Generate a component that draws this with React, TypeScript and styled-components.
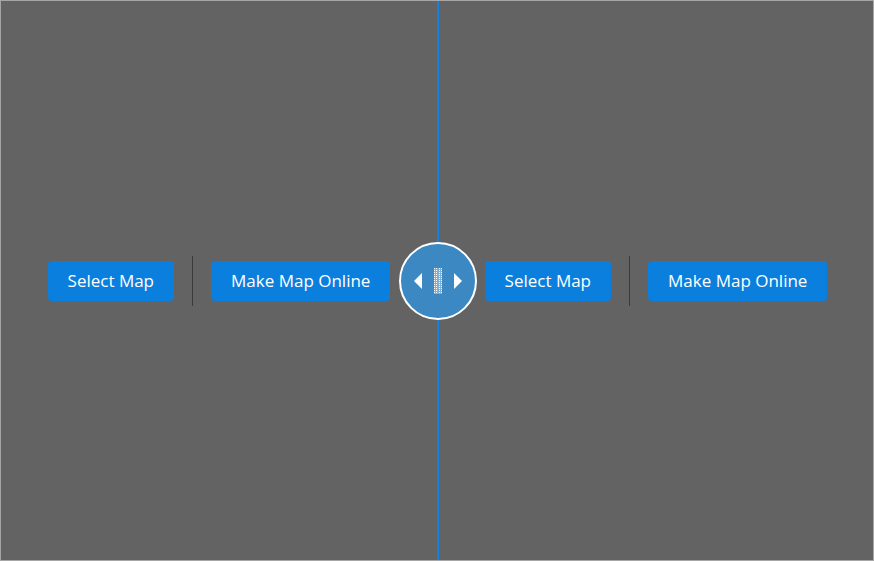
import React from "react";
import styled, { createGlobalStyle } from "styled-components";

const Global = createGlobalStyle`
  html, body { margin: 0; padding: 0; background: #636363; }
  #root { width: 874px; height: 561px; }
  * { box-sizing: border-box; }
`;

const Frame = styled.div`
  width: 874px;
  height: 561px;
  border: 1px solid #a6a6a6;
  background: #636363;
  display: flex;
  position: relative;
  font-family: "Segoe UI", "Open Sans", "Noto Sans", sans-serif;
`;

const Pane = styled.div<{ $width: number }>`
  width: ${(p) => p.$width}px;
  height: 100%;
  display: flex;
  align-items: center;
  justify-content: center;
`;

const Toolbar = styled.div`
  display: flex;
  align-items: center;
`;

const Button = styled.button`
  height: 40px;
  padding: 0 20px;
  border: none;
  border-radius: 4px;
  background: #0a7fde;
  color: #ffffff;
  font-family: inherit;
  font-size: 17px;
  line-height: 40px;
  white-space: nowrap;
  cursor: pointer;
`;

const Divider = styled.div`
  width: 1px;
  height: 50px;
  margin: 0 18px 0 18px;
  background: #3a3a3a;
`;

const Splitter = styled.div`
  width: 2px;
  height: 100%;
  background: #1282e0;
  position: relative;
`;

const Handle = styled.div`
  position: absolute;
  left: 50%;
  top: 50%;
  width: 78px;
  height: 78px;
  transform: translate(-50%, -50%);
  border-radius: 50%;
  border: 2px solid #ffffff;
  background: #3b88c3;
  display: flex;
  align-items: center;
  justify-content: center;
  gap: 12px;
`;

const Arrow = styled.div<{ $dir: "left" | "right" }>`
  width: 0;
  height: 0;
  border-top: 8px solid transparent;
  border-bottom: 8px solid transparent;
  ${(p) =>
    p.$dir === "left"
      ? "border-right: 8px solid #ffffff;"
      : "border-left: 8px solid #ffffff;"}
`;

const Grip = () => {
  const dots: React.ReactElement[] = [];
  const cols = [0, 2, 5, 7];
  for (let r = 0; r < 13; r++) {
    for (const c of cols) {
      dots.push(
        <rect key={`${r}-${c}`} x={c} y={r * 2} width={1} height={1} fill="#ffffff" />
      );
    }
  }
  return (
    <svg width="8" height="26" viewBox="0 0 8 26" style={{ display: "block" }}>
      <rect x="0" y="0" width="8" height="26" fill="#ffffff" opacity="0.35" />
      {dots}
    </svg>
  );
};

const MapToolbar = () => (
  <Toolbar>
    <Button>Select Map</Button>
    <Divider />
    <Button>Make Map Online</Button>
  </Toolbar>
);

export default function App() {
  return (
    <>
      <Global />
      <Frame>
        <Pane $width={436}>
          <MapToolbar />
        </Pane>
        <Splitter>
          <Handle>
            <Arrow $dir="left" />
            <Grip />
            <Arrow $dir="right" />
          </Handle>
        </Splitter>
        <Pane $width={434}>
          <MapToolbar />
        </Pane>
      </Frame>
    </>
  );
}
